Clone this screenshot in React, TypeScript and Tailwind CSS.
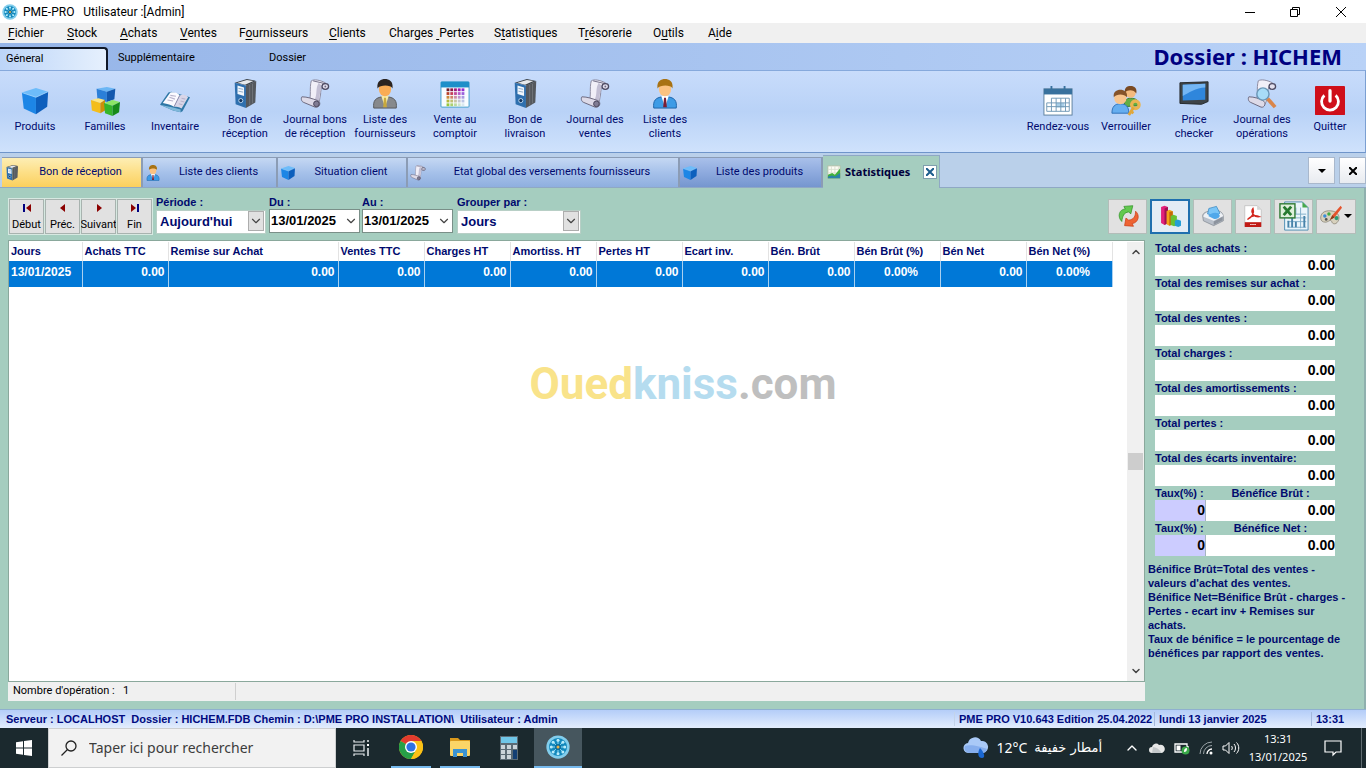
import { useState } from 'react';
import type { ComponentType, ReactNode } from 'react';
import { ChevronDown, ChevronUp } from 'lucide-react';

interface IconProps {
  className?: string;
}

// ---------- Icons ----------

function CubeIcon({ className }: IconProps) {
  return (
    <svg viewBox="0 0 32 32" className={className}>
      <path d="M2 7 17 2l13 4-13 6z" fill="#6dbcfa" />
      <path d="M2 7l15 5v18L4 24z" fill="#1d86e6" />
      <path d="M30 6 17 12v18l12-8z" fill="#0d5fbd" />
      <path d="M2 7l15 5 13-6" fill="none" stroke="#a5d8ff" strokeWidth="0.8" />
    </svg>
  );
}

function CubesIcon({ className }: IconProps) {
  return (
    <svg viewBox="0 0 32 32" className={className}>
      <path d="M7 3l11-2 9 2-9 3z" fill="#6bb6f5" />
      <path d="M7 3l11 3v11L8 15z" fill="#2b7fd8" />
      <path d="M27 3l-9 3v11l8-3z" fill="#1458ad" />
      <path d="M1 15l8-2 7 2-5 3z" fill="#ffe680" />
      <path d="M1 15l10 3v11L2 26z" fill="#f4bd1a" />
      <path d="M16 15l-5 3v11l5-3z" fill="#cf8f08" />
      <path d="M15 18l9-3 8 2-8 4z" fill="#8ce567" />
      <path d="M15 18l9 3v11l-8-3z" fill="#35b52a" />
      <path d="M32 17l-8 4v11l7-4z" fill="#178a1a" />
    </svg>
  );
}

function BookIcon({ className }: IconProps) {
  return (
    <svg viewBox="0 0 32 32" className={className}>
      <path d="M0 20 9 7l3-1 10 3 10 3-8 15-2 1-8-2z" fill="#2f77a6" />
      <path d="M0 20l14 6 8 2v-3l-8-2z" fill="#7fb8da" />
      <path d="M3 18 11 7c4-1 8 0 10 3l-6 12c-3-2-7-3-12-4z" fill="#fbfaff" />
      <path d="M21 10c3-1 6-1 9 2l-7 12c-3-2-5-2-8-2z" fill="#d9d6e8" />
      <path d="M21 10l-6 12" stroke="#8c88a8" />
      <path d="M11 10l6 1M10 12l6 2M8 15l6 1M23 13l4 1M22 16l4 1M20 19l4 1" stroke="#b9b4cc" strokeWidth="1.200" />
    </svg>
  );
}

function BinderIcon({ className }: IconProps) {
  return (
    <svg viewBox="0 0 32 32" className={className}>
      <path d="M5 4 18 0l10 2-10 5z" fill="#3d4247" />
      <path d="M8 4 18 1l7 1-9 4z" fill="#e6e9ec" />
      <path d="M5 4l12 3v24L6 27z" fill="#2e6fae" />
      <path d="M28 2 17 7v24l10-6z" fill="#54585d" />
      <path d="M21 6v22M24 5v21" stroke="#777b80" strokeWidth="0.8" />
      <path d="M8 7l7 2v9l-7-2z" fill="#f2f7fc" />
      <path d="M9 10l5 1M9 13l5 1" stroke="#8aa7c5" />
      <circle cx="11.500" cy="23" r="2.200" fill="#12345e" stroke="#b9d4ee" />
    </svg>
  );
}

function ScrollIcon({ className }: IconProps) {
  return (
    <svg viewBox="0 0 32 32" className={className}>
      <path d="M12 2c3-2 9-1 15 2-4 3-5 8-5 12-1 5-1 8-3 11l-9-5c2-4 0-12 2-20z" fill="#f1eff8" stroke="#8b879c" />
      <path d="M20 4c-4 6-1 13-5 19l4 4c3-6 1-14 5-19z" fill="#c3bfd4" />
      <path d="M14 2l13 3" stroke="#6f6b84" />
      <ellipse cx="27" cy="8" rx="3.500" ry="3" fill="#e3e0ee" stroke="#4d4a62" strokeWidth="1.400" />
      <circle cx="27" cy="8" r="1" fill="#6f6b84" />
      <path d="M2 19c6 0 11 2 17 4 4 2 2 8-3 7L4 25c-3-1-3-5-2-6z" fill="#dddae8" stroke="#66637a" />
      <circle cx="17.500" cy="26.500" r="3" fill="#807c94" stroke="#45425a" />
    </svg>
  );
}

function SupplierIcon({ className }: IconProps) {
  return (
    <svg viewBox="0 0 32 32" className={className}>
      <path d="M4 31c-1-8 2-11 9-12h6c7 1 10 4 9 12z" fill="#87898c" stroke="#55575a" />
      <path d="M12 18l4 12 4-12z" fill="#f7e9a4" />
      <path d="M15 20h2l1 10h-4z" fill="#c9a93c" />
      <ellipse cx="16" cy="11" rx="6.500" ry="7.500" fill="#f9ac55" />
      <path d="M8 10c-1-8 4-10 8-10s9 2 8 10c-2-4-13-4-16 0z" fill="#2b2420" />
    </svg>
  );
}

function ClientIcon({ className }: IconProps) {
  return (
    <svg viewBox="0 0 32 32" className={className}>
      <path d="M4 31c-1-8 2-11 9-12h6c7 1 10 4 9 12z" fill="#3d9be6" stroke="#1c62a8" />
      <path d="M12 18l4 12 4-12z" fill="#fff" />
      <path d="M15 20h2l1 10h-4z" fill="#7c1f35" />
      <ellipse cx="16" cy="11" rx="6.500" ry="7.500" fill="#fbc281" />
      <path d="M8 10c-1-8 4-10 8-10s9 2 8 10c-2-4-13-4-16 0z" fill="#a87213" />
    </svg>
  );
}

const palette = [
  '#6d1a2a', '#8c1743', '#a0187a', '#a11bb0', '#8f2ad0',
  '#b8402a', '#c33f5a', '#c04a9a', '#b45ac8', '#9a60dc',
  '#cc8a3c', '#d0846a', '#cc8ea4', '#bd95cb', '#a99ae0',
  '#b4b83c', '#c2bf74', '#c8c4a5', '#c5c6cf', '#b9c4e4',
  '#96c83c', '#abd070', '#bddaa0', '#cde3ca', '#d8e8ee',
];

function CounterIcon({ className }: IconProps) {
  return (
    <svg viewBox="0 0 32 32" className={className}>
      <rect x="1" y="3" width="30" height="27" rx="1" fill="#f8fcff" stroke="#3c9ccb" />
      <rect x="1" y="3" width="30" height="6" fill="#1d8fc9" />
      {palette.map((fill, i) => (
        <rect key={i} x={7 + (i % 5) * 4} y={10 + Math.floor(i / 5) * 4} width="3" height="3" fill={fill} />
      ))}
    </svg>
  );
}

function AgendaIcon({ className }: IconProps) {
  return (
    <svg viewBox="0 0 32 32" className={className}>
      <rect x="1" y="3" width="30" height="28" fill="#fff" stroke="#5a7f9d" />
      <rect x="1" y="3" width="30" height="6" fill="#38719d" />
      <path d="M9 0v6M23 0v6" stroke="#38719d" strokeWidth="2" />
      <path d="M14 18h9v5h-9z" fill="#a9cfe8" />
      <path d="M9 13h19v14H4v-9h24M4 22h24M9 13v14M14 13v14M19 13v14M24 13v14" fill="none" stroke="#6f97b5" />
    </svg>
  );
}

function UsersLockIcon({ className }: IconProps) {
  return (
    <svg viewBox="0 0 32 32" className={className}>
      <path d="M14 22c0-6 2-9 7-9s9 2 9 8z" fill="#63ad45" stroke="#397d25" />
      <circle cx="21" cy="7" r="5.500" fill="#f4ba7e" />
      <path d="M15 7c-1-5 2-7 6-7s7 2 6 8c-2-4-9-5-12-1z" fill="#7a4a23" />
      <path d="M1 29c0-7 3-10 9-10s9 3 9 10z" fill="#66aef0" stroke="#2d6fb5" />
      <circle cx="10" cy="13" r="6.500" fill="#f8c48c" />
      <path d="M3 12c-1-6 3-8 7-8s8 2 7 8c-3-4-11-4-14 0z" fill="#85532a" />
      <circle cx="26" cy="20" r="4" fill="none" stroke="#e9b552" strokeWidth="3.500" />
      <path d="M24 23l-5 8M21 27l3 2" stroke="#e1a73a" strokeWidth="3" />
    </svg>
  );
}

function MonitorIcon({ className }: IconProps) {
  return (
    <svg viewBox="0 0 32 32" className={className}>
      <path d="M1 4 31 3v21l-7 3-23-1z" fill="#3e4448" stroke="#22272b" />
      <path d="M4 6 28 5v17l-24 1z" fill="#2f86dc" />
      <path d="M4 6 28 5v4C18 9 10 15 4 18z" fill="#74b6f4" />
    </svg>
  );
}

function ScrollSearchIcon({ className }: IconProps) {
  return (
    <svg viewBox="0 0 32 32" className={className}>
      <path d="M12 2c3-2 9-1 15 2-4 3-5 8-5 12-1 5-1 8-3 11l-9-5c2-4 0-12 2-20z" fill="#f1eff8" stroke="#8b879c" />
      <ellipse cx="27" cy="8" rx="3.500" ry="3" fill="#e3e0ee" stroke="#4d4a62" strokeWidth="1.400" />
      <path d="M2 19c6 0 11 2 15 4 4 2 2 8-2 7L4 25c-3-1-3-5-2-6z" fill="#dddae8" stroke="#66637a" />
      <circle cx="17" cy="16" r="6.500" fill="#a8dcf7" stroke="#6a97b8" strokeWidth="1.500" />
      <path d="M22 21l8 9" stroke="#d9854a" strokeWidth="4" />
    </svg>
  );
}

function PowerIcon({ className }: IconProps) {
  return (
    <svg viewBox="0 0 32 32" className={className}>
      <rect width="32" height="31" rx="1" fill="#cf0f1a" />
      <path d="M10 10a9 9 0 1 0 12 0" fill="none" stroke="#fff" strokeWidth="3" />
      <path d="M16 5v11" stroke="#fff" strokeWidth="3.500" strokeLinecap="round" />
    </svg>
  );
}

function RefreshIcon({ className }: IconProps) {
  return (
    <svg viewBox="0 0 32 32" className={className}>
      <path d="M7 24C0 17 3 6 12 6l-2-4 13-1-3 12-3-3c-7 1-9 6-10 14z" fill="#62c94e" stroke="#2a8f22" />
      <path d="M27 9c7 6 4 17-5 18l2 4-13-1 2-11 4 3c8-1 10-6 10-13z" fill="#ee6433" stroke="#c83a12" />
    </svg>
  );
}

function BarsIcon({ className }: IconProps) {
  return (
    <svg viewBox="0 0 32 32" className={className}>
      <path d="M3 3l5-2 5 2v23l-5 3-5-3z" fill="#e2217a" />
      <path d="M8 5l5-2v23l-5 3z" fill="#9e1152" />
      <path d="M11 9l4-2 5 2v19l-5 2-4-2z" fill="#f4a21a" />
      <path d="M15 10l5-1v19l-5 2z" fill="#c46a08" />
      <path d="M17 16l4-2 5 2v13l-4 2-5-2z" fill="#66c234" />
      <path d="M23 23l4-2 5 2v7l-4 2-5-2z" fill="#249ed6" />
    </svg>
  );
}

function PrinterIcon({ className }: IconProps) {
  return (
    <svg viewBox="0 0 32 32" className={className}>
      <path d="M1 16c0-4 4-6 9-7l12-1c6 1 9 5 9 9v6l-14 7L2 23z" fill="#b9c0ca" stroke="#7d848e" />
      <path d="M2 17l15 6 14-7c-2-5-6-7-10-7L9 10c-4 1-7 3-7 7z" fill="#eef1f5" />
      <path d="M10 5l11-3 5 10-5 4-13-3z" fill="#79c5f7" stroke="#2f82bd" />
      <path d="M9 16c3-4 9-6 15-4l2 4c-2 4-6 5-9 4z" fill="#4fa8ea" />
      <path d="M17 24l13-7v5l-13 7z" fill="#8c939d" />
    </svg>
  );
}

function PdfIcon({ className }: IconProps) {
  return (
    <svg viewBox="0 0 32 32" className={className}>
      <path d="M4 1h18l6 6v24H4z" fill="#fff" stroke="#b7b7b7" />
      <path d="M22 1v6h6z" fill="#d5d5d5" />
      <rect x="4" y="25" width="24" height="7" fill="#c11b16" />
      <path d="M8 21c7-3 10-10 8-16-4 5 1 13 9 12-6-3-12-1-17 4z" fill="none" stroke="#d3271e" strokeWidth="2" />
      <path d="M12 28.500h8" stroke="#fff" strokeWidth="1.500" strokeDasharray="2 1" />
    </svg>
  );
}

function ExcelIcon({ className }: IconProps) {
  return (
    <svg viewBox="0 0 32 32" className={className}>
      <path d="M6 1h19l6 6v24H6z" fill="#eaf5fb" stroke="#4a8cb1" />
      <path d="M25 1v6h6z" fill="#46a84b" />
      <path d="M9 14h20M9 18h20M9 22h20M18 7v7M23 7v22M9 28h20" stroke="#7faec9" />
      <path d="M10 28v-7M14 28v-10M18 28v-6M27 28v-12" stroke="#4883a9" strokeWidth="2" />
      <rect x="1" y="3" width="16" height="15" fill="#dff0dc" stroke="#2f7a35" strokeWidth="1.500" />
      <path d="M5 6l8 9M13 6l-8 9" stroke="#277a30" strokeWidth="3" />
    </svg>
  );
}

function PaintIcon({ className }: IconProps) {
  return (
    <svg viewBox="0 0 32 32" className={className}>
      <path d="M1 19c0-9 8-12 18-10 8 2 11 9 7 15-3 5-8 4-9 0-2-4-5 1-9 1s-7-2-7-6z" fill="#d8d1bd" stroke="#7d7869" />
      <circle cx="7" cy="16" r="2.500" fill="#3a8dd8" />
      <circle cx="13" cy="13" r="2.500" fill="#40ac43" />
      <circle cx="9" cy="21" r="2" fill="#555" />
      <circle cx="24" cy="19" r="3" fill="#2a9b76" />
      <path d="M30 1 18 15l-3 6 6-3L32 4z" fill="#e5532c" />
      <path d="M18 15l-4 7 7-4z" fill="#8a3c1b" />
    </svg>
  );
}

function TrendIcon({ className }: IconProps) {
  return (
    <svg viewBox="0 0 16 16" className={className}>
      <rect x="1" y="1" width="14" height="14" fill="#fdfdf5" stroke="#b0bda5" />
      <path d="M1 5h14M1 9h14M5 1v14M9 1v14M13 1v8" stroke="#d9dfd0" />
      <path d="M1 15v-4l5-2 3 2 6-7v11z" fill="#42b13d" />
      <path d="M1 15v-2l5-1 3 1 6-4v6z" fill="#2b82a8" />
    </svg>
  );
}

function AppLogo({ className }: IconProps) {
  return (
    <svg viewBox="0 0 32 32" className={className}>
      <circle cx="16" cy="16" r="15.500" fill="#82cdec" />
      <circle cx="16" cy="16" r="12" fill="#1389bd" />
      <path d="M16 6v20M6 16h20M9 9l14 14M23 9 9 23" stroke="#9ce0f6" strokeWidth="1.200" />
      <g fill="#b9ecfb">
        <circle cx="16" cy="7" r="2" />
        <circle cx="16" cy="25" r="2" />
        <circle cx="7" cy="16" r="2" />
        <circle cx="25" cy="16" r="2" />
        <circle cx="9.500" cy="9.500" r="2" />
        <circle cx="22.500" cy="22.500" r="2" />
        <circle cx="22.500" cy="9.500" r="2" />
        <circle cx="9.500" cy="22.500" r="2" />
      </g>
      <circle cx="16" cy="16" r="4" fill="#0c6b99" />
      <circle cx="16" cy="16" r="2" fill="#e9b24c" />
    </svg>
  );
}

function WindowsIcon() {
  return (
    <svg viewBox="0 0 16 16" className="size-4">
      <path d="M0 2.300 7 1.300V7.500H0zM8 1.100 16 0v7.500H8zM0 8.500h7v6.200l-7-1zM8 8.500h8V16l-8-1.100z" fill="#fff" />
    </svg>
  );
}

function TaskViewIcon() {
  return (
    <svg viewBox="0 0 18 18" className="size-4.5">
      <path d="M2 1v2h10V1M2 6h10v6H2zM2 17v-2h10v2" fill="none" stroke="#e8ecee" strokeWidth="1.200" />
      <path d="M16 1v2M16 9v8" stroke="#e8ecee" strokeWidth="1.500" />
      <rect x="15" y="5" width="2" height="2" fill="#fff" />
    </svg>
  );
}

function ChromeIcon() {
  return (
    <svg viewBox="0 0 24 24" className="size-6">
      <circle cx="12" cy="12" r="12" fill="#fbc116" />
      <path d="M12 12 1.600 6A12 12 0 0 1 22.400 6z" fill="#e33b2e" />
      <path d="M12 12 1.600 6A12 12 0 0 0 12 24l5-9z" fill="#27a048" />
      <path d="M12 6h10.400A12 12 0 0 1 12 24l5.200-9z" fill="#fbc116" />
      <circle cx="12" cy="12" r="6" fill="#fff" />
      <circle cx="12" cy="12" r="4.600" fill="#2f72e2" />
    </svg>
  );
}

function FolderIcon() {
  return (
    <svg viewBox="0 0 24 24" className="size-6">
      <path d="M2 3h8l2 2h10v4H2z" fill="#d9991c" />
      <rect x="2" y="6" width="20" height="15" rx="1" fill="#fbd567" />
      <path d="M5 14h14v8h-4v-4H9v4H5z" fill="#3b94d3" />
    </svg>
  );
}

function CalculatorIcon() {
  return (
    <svg viewBox="0 0 24 24" className="size-6">
      <rect x="3" y="0" width="18" height="24" fill="#5b6b75" />
      <rect x="4" y="1" width="16" height="6" fill="#6fc6e8" />
      <path d="M4 9h4v4H4zM10 9h4v4h-4zM4 14h4v4H4zM10 14h4v4h-4zM4 19h4v4H4zM10 19h4v4h-4zM16 9h4v4h-4z" fill="#c9d3d9" />
      <rect x="16" y="14" width="4" height="9" fill="#133f73" />
    </svg>
  );
}

function WeatherIcon() {
  return (
    <svg viewBox="0 0 26 22" className="h-[22px] w-[26px]">
      <path d="M6 16a5 5 0 0 1-1-10 7 7 0 0 1 13-2 6 6 0 0 1 2 12z" fill="#a9c9f7" />
      <path d="M6 16a5 5 0 0 1-4-7c6-2 16 1 22 3a6 6 0 0 1-4 4z" fill="#86aeed" />
      <path d="M17 11c4 4 6 10 2 10s-5-5-2-10z" fill="#1a67d2" />
    </svg>
  );
}

function OneDriveIcon() {
  return (
    <svg viewBox="0 0 16 10" className="h-2.5 w-4">
      <path d="M3 10a3 3 0 0 1 0-6 4 4 0 0 1 7-2 4 4 0 0 1 3 8z" fill="#e8e8e8" />
      <path d="M4 4c3 0 6 2 9 6H3z" fill="#c4c8ca" />
    </svg>
  );
}

function BatteryIcon() {
  return (
    <svg viewBox="0 0 16 14" className="h-3.5 w-4">
      <path d="M1 3h12v8H1zM14 5v4" fill="none" stroke="#fff" strokeWidth="1.300" />
      <rect x="2.500" y="4.500" width="4" height="5" fill="#fff" />
      <circle cx="11.500" cy="9.500" r="4" fill="#3aa848" />
      <path d="M10 11c0-3 1-4 3-4 0 3-1 4-3 4z" fill="#fff" />
    </svg>
  );
}

function WifiIcon() {
  return (
    <svg viewBox="0 0 14 14" className="size-3.5">
      <path d="M1 13A12 12 0 0 1 13 1M4.500 13A8.500 8.500 0 0 1 13 4.500" fill="none" stroke="#9aa3a7" />
      <path d="M8 13a5 5 0 0 1 5-5" fill="none" stroke="#fff" strokeWidth="1.300" />
      <circle cx="12" cy="12" r="1.500" fill="#fff" />
    </svg>
  );
}

function SpeakerIcon() {
  return (
    <svg viewBox="0 0 18 14" className="h-3.5 w-[18px]">
      <path d="M1 5h2.500L7 1.500v11L3.500 9H1zM9.500 5c1 1 1 3 0 4M12 3c2 2 2 6 0 8M14.500 1.500c3 3 3 8 0 11" fill="none" stroke="#fff" />
    </svg>
  );
}

// ---------- Data ----------

const menus = [
  { before: '', key: 'F', after: 'ichier', width: 'w-[59px]' },
  { before: '', key: 'S', after: 'tock', width: 'w-[53px]' },
  { before: '', key: 'A', after: 'chats', width: 'w-[60px]' },
  { before: '', key: 'V', after: 'entes', width: 'w-[59px]' },
  { before: 'F', key: 'o', after: 'urnisseurs', width: 'w-[90px]' },
  { before: '', key: 'C', after: 'lients', width: 'w-[60px]' },
  { before: 'Charges ', key: ' ', after: 'Pertes', width: 'w-[105px]' },
  { before: 'S', key: 't', after: 'atistiques', width: 'w-[84px]' },
  { before: 'T', key: 'r', after: 'ésorerie', width: 'w-[75px]' },
  { before: 'O', key: 'u', after: 'tils', width: 'w-[55px]' },
  { before: 'A', key: 'i', after: 'de', width: 'w-[50px]' },
];

interface RibbonItem {
  lines: string[];
  icon: ComponentType<IconProps>;
}

const ribbonLeft: RibbonItem[] = [
  { lines: ['Produits'], icon: CubeIcon },
  { lines: ['Familles'], icon: CubesIcon },
  { lines: ['Inventaire'], icon: BookIcon },
  { lines: ['Bon de', 'réception'], icon: BinderIcon },
  { lines: ['Journal bons', 'de réception'], icon: ScrollIcon },
  { lines: ['Liste des', 'fournisseurs'], icon: SupplierIcon },
  { lines: ['Vente au', 'comptoir'], icon: CounterIcon },
  { lines: ['Bon de', 'livraison'], icon: BinderIcon },
  { lines: ['Journal des', 'ventes'], icon: ScrollIcon },
  { lines: ['Liste des', 'clients'], icon: ClientIcon },
];

const ribbonRight: RibbonItem[] = [
  { lines: ['Rendez-vous'], icon: AgendaIcon },
  { lines: ['Verrouiller'], icon: UsersLockIcon },
  { lines: ['Price', 'checker'], icon: MonitorIcon },
  { lines: ['Journal des', 'opérations'], icon: ScrollSearchIcon },
  { lines: ['Quitter'], icon: PowerIcon },
];

const openTabs = [
  { label: 'Bon de réception', icon: BinderIcon, style: 'w-[141px] from-[#fdeeb4] via-[#fddf86] to-[#fbd05c]' },
  { label: 'Liste des clients', icon: ClientIcon, style: 'w-[135px] from-[#c5d8f3] via-[#a6c1ea] to-[#8fafdf]' },
  { label: 'Situation client', icon: CubeIcon, style: 'w-[130px] from-[#c5d8f3] via-[#a6c1ea] to-[#8fafdf]' },
  { label: 'Etat global des versements fournisseurs', icon: ScrollIcon, style: 'w-[272px] from-[#c5d8f3] via-[#a6c1ea] to-[#8fafdf]' },
  { label: 'Liste des produits', icon: CubeIcon, style: 'w-[143px] from-[#a9c0ea] via-[#8eaade] to-[#7596cf]' },
];

const columns = [
  { label: 'Jours', value: '13/01/2025', width: 'w-[73px]', align: 'pl-0.5 text-left' },
  { label: 'Achats TTC', value: '0.00', width: 'w-[86px]', align: 'pr-[3px] text-right' },
  { label: 'Remise sur Achat', value: '0.00', width: 'w-[170px]', align: 'pr-[3px] text-right' },
  { label: 'Ventes TTC', value: '0.00', width: 'w-[86px]', align: 'pr-[3px] text-right' },
  { label: 'Charges HT', value: '0.00', width: 'w-[86px]', align: 'pr-[3px] text-right' },
  { label: 'Amortiss. HT', value: '0.00', width: 'w-[86px]', align: 'pr-[3px] text-right' },
  { label: 'Pertes HT', value: '0.00', width: 'w-[86px]', align: 'pr-[3px] text-right' },
  { label: 'Ecart inv.', value: '0.00', width: 'w-[86px]', align: 'pr-[3px] text-right' },
  { label: 'Bén. Brût', value: '0.00', width: 'w-[86px]', align: 'pr-[3px] text-right' },
  { label: 'Bén Brût (%)', value: '0.00%', width: 'w-[86px]', align: 'pl-2 text-center' },
  { label: 'Bén Net', value: '0.00', width: 'w-[86px]', align: 'pr-[3px] text-right' },
  { label: 'Bén Net (%)', value: '0.00%', width: 'w-[86px]', align: 'pl-2 text-center' },
];

const totals = [
  'Total des achats :',
  'Total des remises sur achat :',
  'Total des ventes :',
  'Total charges :',
  'Total des amortissements :',
  'Total pertes :',
  'Total des écarts inventaire:',
];

// ---------- Header ----------

function TitleBar() {
  return (
    <div className="flex h-[23px] items-center bg-white text-xs">
      <AppLogo className="ml-0.5 size-4" />
      <span className="ml-[5px] whitespace-pre">PME-PRO   Utilisateur :[Admin]</span>
      <div className="ml-auto flex pr-0.5">
        <button aria-label="Réduire" className="flex w-[45px] justify-center">
          <svg viewBox="0 0 10 10" className="size-2.5"><path d="M0 5.500h10" stroke="#000" /></svg>
        </button>
        <button aria-label="Restaurer" className="flex w-[46px] justify-center">
          <svg viewBox="0 0 10 10" className="size-2.5" fill="none" stroke="#000">
            <path d="M.5 2.500h7v7h-7zM2.500 2.500v-2h7v7h-2" />
          </svg>
        </button>
        <button aria-label="Fermer" className="flex w-[46px] justify-center">
          <svg viewBox="0 0 10 10" className="size-2.5"><path d="M0 0l10 10M10 0 0 10" stroke="#000" /></svg>
        </button>
      </div>
    </div>
  );
}

function MenuBar() {
  return (
    <nav className="flex h-5 items-center bg-[#f0f0f0] pl-2 text-xs">
      {menus.map((menu) => (
        <button key={menu.before + menu.key + menu.after} className={`${menu.width} text-left whitespace-pre`}>
          {menu.before}
          <span className="underline underline-offset-2">{menu.key}</span>
          {menu.after}
        </button>
      ))}
    </nav>
  );
}

function RibbonButton({ item, width }: { item: RibbonItem; width: string }) {
  const Icon = item.icon;

  return (
    <button className={`${width} flex flex-col items-center justify-center gap-1 pb-1 text-[11px] leading-3.5 whitespace-nowrap text-[#000a6e]`}>
      <Icon className="size-[30px]" />
      <span>
        {item.lines.map((line) => (
          <span key={line} className="block">{line}</span>
        ))}
      </span>
    </button>
  );
}

function Ribbon() {
  return (
    <header>
      <div className="flex h-[27px] items-end bg-linear-to-r from-[#96b5e8] to-[#b9d2f7] text-[11px]">
        <button className="h-[23px] w-[108px] rounded-tr border-t-2 border-r-2 border-[#101828] bg-linear-to-r from-[#bcd5f8] to-[#e6f0fd] pl-1.5 text-left">
          Géneral
        </button>
        <button className="h-[23px] w-[151px] pl-2.5 text-left">Supplémentaire</button>
        <button className="h-[23px] pl-2.5">Dossier</button>
        <h1 className="mr-6 ml-auto self-start font-['Noto_Sans',sans-serif] text-[22px] leading-[26px] font-bold text-[#000080]">
          Dossier : HICHEM
        </h1>
      </div>
      <div className="flex h-[83px] justify-between border-t border-r border-b border-t-[#86a9dc] border-r-[#7b9fd2] border-b-[#6f95ca] bg-linear-to-b from-[#c8dcfb] via-[#b9d2f7] to-[#cfe2fc] pr-px">
        <div className="flex">
          {ribbonLeft.map((item) => <RibbonButton key={item.lines.join(' ')} item={item} width="w-[70px]" />)}
        </div>
        <div className="flex">
          {ribbonRight.map((item) => <RibbonButton key={item.lines.join(' ')} item={item} width="w-[68px]" />)}
        </div>
      </div>
    </header>
  );
}

function DocumentTabs() {
  return (
    <div className="flex h-[35px] items-end border-b border-[#8fa8c4] bg-[#bad0ea] pl-0.5 text-[11px] text-[#000a6e]">
      {openTabs.map(({ label, icon: Icon, style }) => (
        <button
          key={label}
          className={`flex h-[30px] items-center border-t border-r-2 border-[#8b9cb5] bg-linear-to-b pl-0.5 ${style}`}
        >
          <Icon className="size-4 shrink-0" />
          <span className="flex-1 text-center whitespace-nowrap">{label}</span>
        </button>
      ))}
      <div className="-mb-px flex h-[33px] w-[117px] items-center gap-1 border-t border-r border-[#8fa8c4] bg-[#a5cdbf] pl-1">
        <TrendIcon className="size-3.5" />
        <button className="font-['Noto_Sans',sans-serif] font-bold text-[#00003c]">Statistiques</button>
        <button aria-label="Fermer l'onglet" className="mr-0.5 ml-auto flex size-3.5 items-center justify-center border border-[#7f9fae] bg-white">
          <svg viewBox="0 0 8 8" className="size-2"><path d="M0 0l8 8M8 0 0 8" stroke="#1b5c8c" strokeWidth="2" /></svg>
        </button>
      </div>
      <div className="mb-[3px] ml-auto flex gap-1">
        <button aria-label="Liste des onglets" className="flex h-[27px] w-[27px] items-center justify-center border border-[#a9b8cc] bg-linear-to-b from-white to-[#e8ebf0]">
          <svg viewBox="0 0 8 4" className="h-1 w-2"><path d="M0 0h8L4 4z" fill="#000" /></svg>
        </button>
        <button aria-label="Fermer tout" className="flex h-[27px] w-[27px] items-center justify-center border border-[#a9b8cc] bg-linear-to-b from-white to-[#e8ebf0]">
          <svg viewBox="0 0 8 8" className="size-2"><path d="M0 0l8 8M8 0 0 8" stroke="#000" strokeWidth="2" /></svg>
        </button>
      </div>
    </div>
  );
}

// ---------- Toolbar ----------

function NavButton({ label, children }: { label: string; children: ReactNode }) {
  return (
    <button className="flex h-[35px] w-[35px] flex-col items-center justify-between border border-[#a8b3af] bg-[#e1e1e1] pt-1 font-['Roboto',sans-serif] text-[11px] leading-4 outline outline-[#d7e8e1]">
      <svg viewBox="0 0 10 8" className="h-2 w-2.5">{children}</svg>
      <span>{label}</span>
    </button>
  );
}

function SelectField({ label, id, options, width }: { label: string; id: string; options: string[]; width: string }) {
  return (
    <div className={width}>
      <label htmlFor={id} className="block text-[11px] leading-3.5 font-bold text-[#000a6e]">{label}</label>
      <div className="relative">
        <select id={id} className="h-6 w-full appearance-none border border-[#b8cfc6] bg-white pl-[3px] text-[13px] font-bold text-[#000a6e]">
          {options.map((option) => <option key={option}>{option}</option>)}
        </select>
        <span className="pointer-events-none absolute top-0.5 right-0.5 flex h-5 w-4 items-center justify-center border border-[#adadad] bg-[#e1e1e1]">
          <ChevronDown className="size-3.5 shrink-0 text-[#444]" />
        </span>
      </div>
    </div>
  );
}

function DateField({ label, id }: { label: string; id: string }) {
  const [date, setDate] = useState('13/01/2025');

  return (
    <div className="w-[91px]">
      <label htmlFor={id} className="block text-[11px] leading-3.5 font-bold text-[#000a6e]">{label}</label>
      <div className="flex h-6 items-center border border-[#7a8f88] bg-white pr-px pl-px">
        <input
          id={id}
          value={date}
          onChange={(e) => setDate(e.target.value)}
          className="w-0 flex-1 text-[13px] font-bold outline-none"
        />
        <ChevronDown className="size-3.5 text-[#444]" />
      </div>
    </div>
  );
}

const actions = [
  { label: 'Actualiser', icon: RefreshIcon, style: 'w-[39px] border-[#b3bdb9] bg-[#e1e1e1]' },
  { label: 'Graphique', icon: BarsIcon, style: 'w-10 border-2 border-[#1f6fae] bg-[#e3ecf5]' },
  { label: 'Imprimer', icon: PrinterIcon, style: 'w-[39px] border-[#b3bdb9] bg-[#e1e1e1]' },
  { label: 'Exporter en PDF', icon: PdfIcon, style: 'w-9 border-[#b3bdb9] bg-[#e1e1e1]' },
  { label: 'Exporter vers Excel', icon: ExcelIcon, style: 'w-[39px] border-[#b3bdb9] bg-[#e1e1e1]' },
];

function Toolbar() {
  return (
    <div className="flex items-end pr-2 pl-[9px]">
      <div className="flex gap-px">
        <NavButton label="Début">
          <path d="M1 0h2v8H1z" fill="#000080" />
          <path d="M9 0v8L4 4z" fill="#8b0000" />
        </NavButton>
        <NavButton label="Préc."><path d="M7 0v8L2 4z" fill="#8b0000" /></NavButton>
        <NavButton label="Suivant"><path d="M3 0v8l5-4z" fill="#8b0000" /></NavButton>
        <NavButton label="Fin">
          <path d="M1 0v8l5-4z" fill="#8b0000" />
          <path d="M7 0h2v8H7z" fill="#000080" />
        </NavButton>
      </div>
      <div className="ml-1 flex gap-0.5">
        <SelectField label="Période :" id="periode" options={["Aujourd'hui", 'Hier', 'Ce mois']} width="mr-px w-[110px]" />
        <DateField label="Du :" id="du" />
        <DateField label="Au :" id="au" />
        <SelectField label="Grouper par :" id="grouper" options={['Jours', 'Mois', 'Année']} width="ml-0.5 w-[124px]" />
      </div>
      <div className="ml-auto flex gap-[3px]">
        {actions.map(({ label, icon: Icon, style }) => (
          <button key={label} aria-label={label} className={`flex h-[35px] items-center justify-center border ${style}`}>
            <Icon className={label === 'Exporter vers Excel' ? 'size-[30px]' : 'size-[22px]'} />
          </button>
        ))}
        <button aria-label="Thème" className="flex h-[35px] w-10 items-center justify-center gap-0.5 border border-[#b3bdb9] bg-[#e1e1e1]">
          <PaintIcon className="size-[22px]" />
          <svg viewBox="0 0 8 4" className="h-1 w-2"><path d="M0 0h8L4 4z" fill="#000" /></svg>
        </button>
      </div>
    </div>
  );
}

// ---------- Content ----------

function StatsTable() {
  return (
    <div className="flex min-w-0 flex-1 flex-col">
      <div className="flex flex-1 border border-[#8aa89c] bg-white pt-px">
        <div className="flex-1">
          <table className="w-[1103px] table-fixed border-collapse font-bold">
            <thead>
              <tr>
                {columns.map(({ label, width }) => (
                  <th key={label} className={`${width} h-[19px] border-r border-[#e3e3e3] pl-0.5 text-left text-[11px] leading-3.5 whitespace-nowrap text-[#000a6e]`}>
                    {label}
                  </th>
                ))}
              </tr>
            </thead>
            <tbody>
              <tr className="bg-[#0078d7] text-white">
                {columns.map(({ label, value, align }) => (
                  <td key={label} className={`h-[26px] border-r border-[#a9d0f0] pb-1 text-[12px] ${align}`}>{value}</td>
                ))}
              </tr>
            </tbody>
          </table>
        </div>
        <div className="flex w-[17px] flex-col items-center bg-[#f0f0f0] py-1">
          <ChevronUp className="size-3 text-[#444]" strokeWidth={3} />
          <div className="flex-1" />
          <div className="h-[17px] w-[15px] bg-[#cdcdcd]" />
          <div className="flex-1" />
          <ChevronDown className="size-3 text-[#444]" strokeWidth={3} />
        </div>
      </div>
      <div className="flex h-[19px] items-center bg-[#f0f0f0] font-['Roboto',sans-serif] text-[11px]">
        <span className="w-[228px] border-r border-[#cfcfcf] pl-[5px] whitespace-pre">Nombre d'opération :   1</span>
      </div>
    </div>
  );
}

function RateRow({ title, id }: { title: string; id: string }) {
  return (
    <div className="flex w-[180px] text-[11px] leading-3.5">
      <div className="w-[51px]">
        <label htmlFor={`taux-${id}`} className="block whitespace-nowrap">Taux(%) :</label>
        <input id={`taux-${id}`} readOnly value="0" className="h-[21px] w-full border-r border-[#a5b5c0] bg-[#ccccff] text-right text-sm font-bold text-black" />
      </div>
      <div className="flex-1">
        <label htmlFor={`benefice-${id}`} className="block text-center">{title}</label>
        <input id={`benefice-${id}`} readOnly value="0.00" className="h-[21px] w-full bg-white text-right text-sm font-bold text-black" />
      </div>
    </div>
  );
}

function TotalsPanel() {
  return (
    <aside className="w-[219px] shrink-0 pt-px pl-[3px] font-bold text-[#000a6e]">
      <div className="pl-[7px]">
        {totals.map((label, i) => (
          <div key={label} className="w-[180px]">
            <label htmlFor={`total-${i}`} className="block text-[11px] leading-3.5 whitespace-nowrap">{label}</label>
            <input id={`total-${i}`} readOnly value="0.00" className="block h-[21px] w-full bg-white text-right text-sm font-bold text-black" />
          </div>
        ))}
        <RateRow title="Bénéfice Brût :" id="brut" />
        <RateRow title="Bénéfice Net :" id="net" />
      </div>
      <p className="mt-1.5 text-[11px] leading-3.5">
        Bénifice Brût=Total des ventes -<br />
        valeurs d'achat des ventes.<br />
        Bénifice Net=Bénifice Brût - charges -<br />
        Pertes - ecart inv + Remises sur<br />
        achats.<br />
        Taux de bénifice = le pourcentage de<br />
        bénéfices par rapport des ventes.
      </p>
    </aside>
  );
}

function StatusBar() {
  return (
    <footer className="flex h-[19px] items-center border-t border-[#8fb0cf] bg-linear-to-b from-[#b4cdf8] to-[#e3edfd] font-['Liberation_Sans',sans-serif] text-[11px] leading-3.5 font-bold text-[#000a80]">
      <span className="flex-1 pl-1.5 whitespace-pre">
        {'Serveur : LOCALHOST  Dossier : HICHEM.FDB Chemin : D:\\PME PRO INSTALLATION\\  Utilisateur : Admin'}
      </span>
      <span className="w-[200px] border-l border-[#c3d3ea] pl-1 whitespace-nowrap">PME PRO V10.643 Edition 25.04.2022</span>
      <span className="w-[157px] border-l border-[#a5b9dc] pl-1">lundi 13 janvier 2025</span>
      <span className="w-[55px] border-l border-[#a5b9dc] pl-1">13:31</span>
    </footer>
  );
}

// ---------- Taskbar ----------

function Taskbar() {
  return (
    <div className="flex h-10 items-stretch bg-[#1b292e] font-['Noto_Sans',sans-serif] text-white">
      <button aria-label="Démarrer" className="flex w-12 items-center justify-center"><WindowsIcon /></button>
      <div className="flex w-72 items-center gap-3 border border-[#cdcfd0] bg-[#f2f2f2] pl-3">
        <svg viewBox="0 0 16 16" className="size-4" fill="none" stroke="#222" strokeWidth="1.300">
          <circle cx="10" cy="6" r="5" />
          <path d="M6.500 9.500.5 15.500" />
        </svg>
        <input
          aria-label="Rechercher"
          placeholder="Taper ici pour rechercher"
          className="w-0 flex-1 text-sm outline-none placeholder:text-[#3c3c3c]"
        />
      </div>
      <button aria-label="Affichage des tâches" className="flex w-[50px] items-center justify-center"><TaskViewIcon /></button>
      <button aria-label="Chrome" className="mx-[5px] flex w-10 items-center justify-center border-b-2 border-[#76b9ed]"><ChromeIcon /></button>
      <button aria-label="Explorateur" className="mx-1 flex w-10 items-center justify-center border-b-2 border-[#76b9ed]"><FolderIcon /></button>
      <button aria-label="Calculatrice" className="flex w-[50px] items-center justify-center"><CalculatorIcon /></button>
      <button aria-label="PME-PRO" className="flex w-12 items-center justify-center border-b-2 border-[#76b9ed] bg-[#46565e]"><AppLogo className="size-6" /></button>

      <div className="ml-auto flex items-center">
        <button className="flex items-center gap-[7px] text-sm">
          <WeatherIcon />
          <span>12°C</span>
          <span dir="rtl" className="font-['DejaVu_Sans',sans-serif] text-[13px]">أمطار خفيفة</span>
        </button>
        <div className="ml-[22px] flex items-center gap-[9px]">
          <ChevronUp className="size-4" strokeWidth={2} />
          <OneDriveIcon />
          <BatteryIcon />
          <WifiIcon />
          <SpeakerIcon />
        </div>
        <div className="ml-2 w-[60px] text-center text-[11px] leading-[18px]">
          <div>13:31</div>
          <div>13/01/2025</div>
        </div>
        <button aria-label="Notifications" className="ml-4">
          <svg viewBox="0 0 18 18" className="size-4.5">
            <path d="M1 2h16v11h-5l-3 3v-3H1z" fill="none" stroke="#fff" strokeWidth="1.200" />
          </svg>
        </button>
        <div className="mr-1 ml-[19px] h-10 border-l border-[#5f6b70]" />
      </div>
    </div>
  );
}

export default function App() {
  return (
    <div className="relative flex min-h-screen flex-col bg-white font-['Roboto','Noto_Sans',sans-serif] text-black">
      <TitleBar />
      <MenuBar />
      <Ribbon />
      <DocumentTabs />
      <main className="flex flex-1 flex-col border-r-2 border-[#8fb0ae] bg-[#a5cdbf] pt-[7px] pb-2 font-['Liberation_Sans',Arial,sans-serif]">
        <Toolbar />
        <div className="mt-1.5 flex flex-1 pl-2">
          <StatsTable />
          <TotalsPanel />
        </div>
      </main>
      <StatusBar />
      <Taskbar />

      <div className="pointer-events-none absolute inset-0 flex items-center justify-center font-['Roboto',sans-serif] text-[44px] leading-none font-bold">
        <span className="text-[#f9e38a]">Oued</span>
        <span className="text-[#b5dcef]">kniss</span>
        <span className="text-[#bfbfbf]">.com</span>
      </div>
    </div>
  );
}
